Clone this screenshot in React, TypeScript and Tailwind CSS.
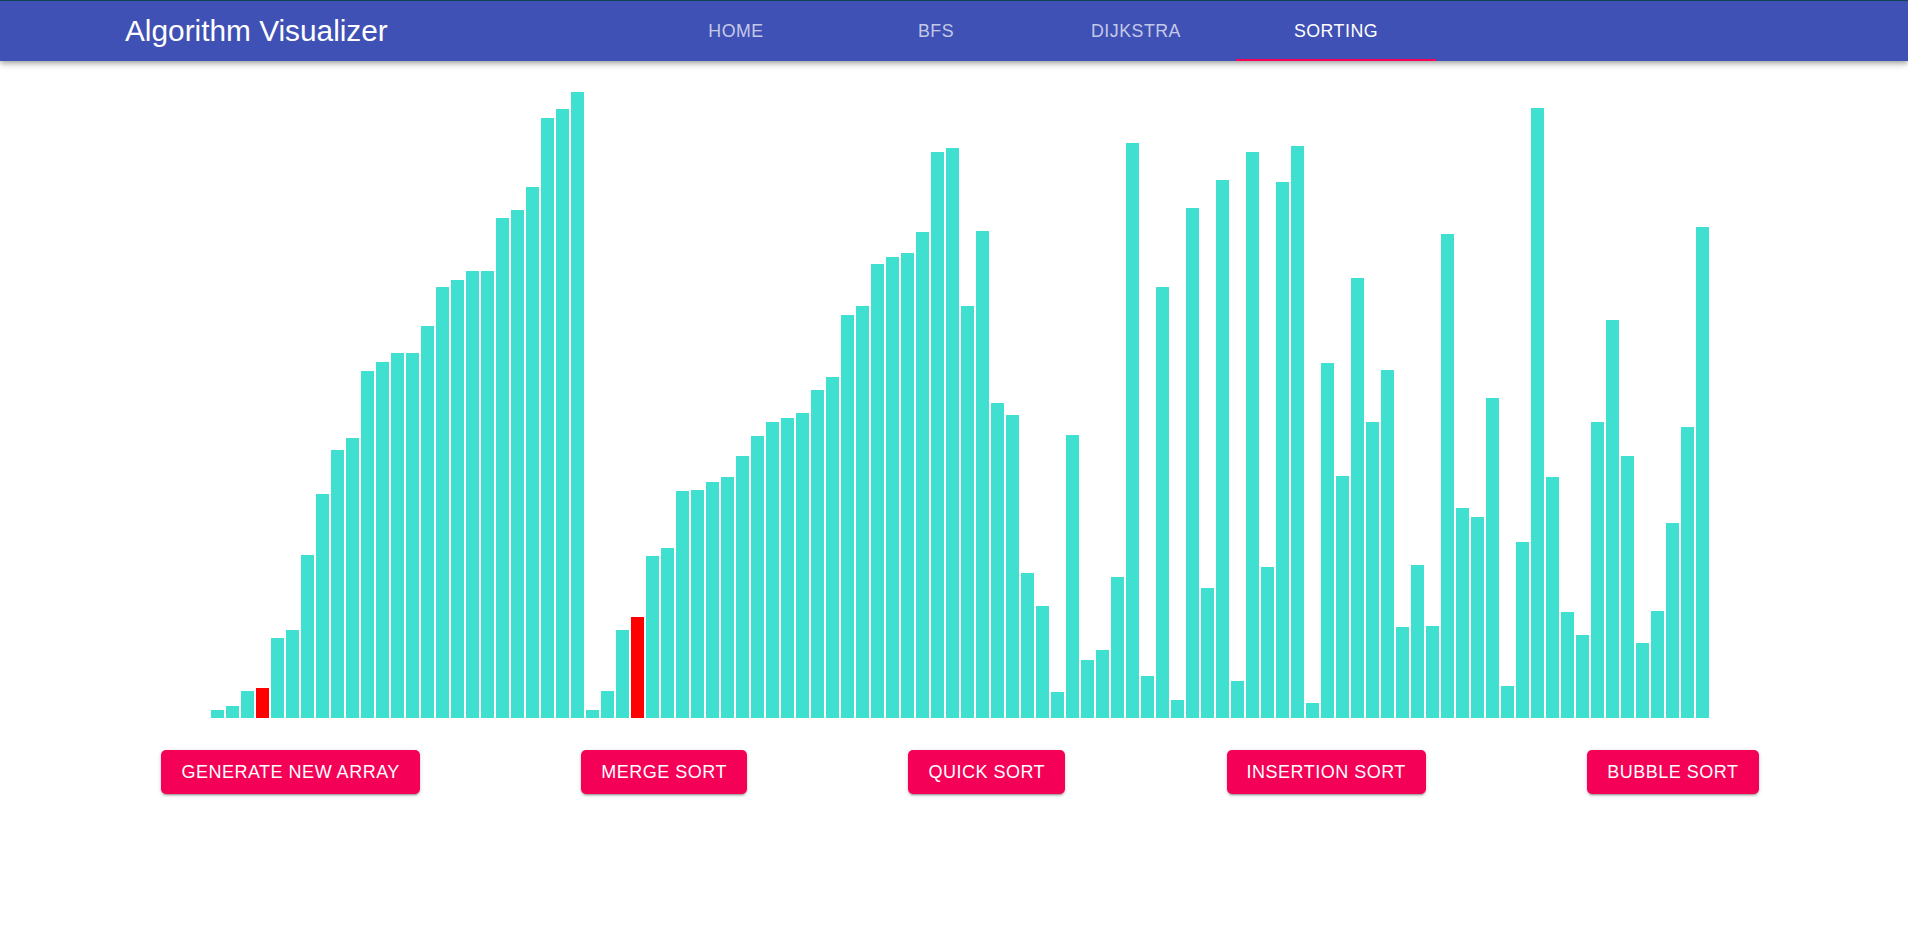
import React from "react";

// bar heights in px, read left to right
const heights = [
  8, 12, 27, 30, 80, 88, 163, 224, 268, 280, 347, 356, 365, 365, 392, 431, 438, 447, 447, 500,
  508, 531, 600, 609, 626, 8, 27, 88, 101, 162, 170, 227, 228, 236, 241, 262, 282, 296, 300, 305,
  328, 341, 403, 412, 454, 461, 465, 486, 566, 570, 412, 487, 315, 303, 145, 112, 26, 283, 58, 68,
  141, 575, 42, 431, 18, 510, 130, 538, 37, 566, 151, 536, 572, 15, 355, 242, 440, 296, 348, 91,
  153, 92, 484, 210, 201, 320, 32, 176, 610, 241, 106, 83, 296, 398, 262, 75, 107, 195, 291, 491,
];

const comparing = [3, 28];

const tabs = ["Home", "BFS", "Dijkstra", "Sorting"];

const buttons = ["Generate New Array", "Merge Sort", "Quick Sort", "Insertion Sort", "Bubble Sort"];

function Header() {
  return (
    <header className="relative z-10 border-t border-[#0f4252] bg-[#3f51b5] shadow-[0_2px_4px_-1px_rgba(0,0,0,0.2),0_4px_5px_0_rgba(0,0,0,0.14),0_1px_10px_0_rgba(0,0,0,0.12)]">
      <div className="flex h-[60px] items-center">
        <div className="w-[636px] pl-[125px]">
          <h1 className="text-[29.8px] leading-none font-normal text-white">Algorithm Visualizer</h1>
        </div>
        <nav className="flex h-full">
          {tabs.map((t) => {
            const active = t === "Sorting";
            return (
              <div
                key={t}
                className={`flex h-full w-[200px] items-center justify-center text-[17.8px] uppercase tracking-[0.5px] ${
                  active ? "text-white shadow-[inset_0_-2px_0_#f50057]" : "text-white/70"
                }`}
              >
                {t}
              </div>
            );
          })}
        </nav>
      </div>
    </header>
  );
}

export default function App() {
  return (
    <div className="min-h-screen overflow-hidden bg-white font-['Liberation_Sans',Arial,sans-serif]">
      <Header />
      <div className="w-[1920px]">
        {/* array bars */}
        <div className="flex h-[657px] items-end justify-center">
          {heights.map((h, i) => (
            <div
              key={i}
              className={`mx-[1px] w-[13px] ${comparing.includes(i) ? "bg-[#ff0000]" : "bg-[#40e0d0]"}`}
              style={{ height: `${h}px` }}
            />
          ))}
        </div>

        {/* controls */}
        <div className="mt-[32px] flex justify-evenly">
          {buttons.map((b) => (
            <button
              key={b}
              className="flex h-[44px] items-center rounded-[5px] bg-[#f50057] px-[20px] text-[18px] uppercase tracking-[0.5px] text-white shadow-[0_3px_1px_-2px_rgba(0,0,0,0.2),0_2px_2px_0_rgba(0,0,0,0.14),0_1px_5px_0_rgba(0,0,0,0.12)]"
            >
              {b}
            </button>
          ))}
        </div>
      </div>
    </div>
  );
}
